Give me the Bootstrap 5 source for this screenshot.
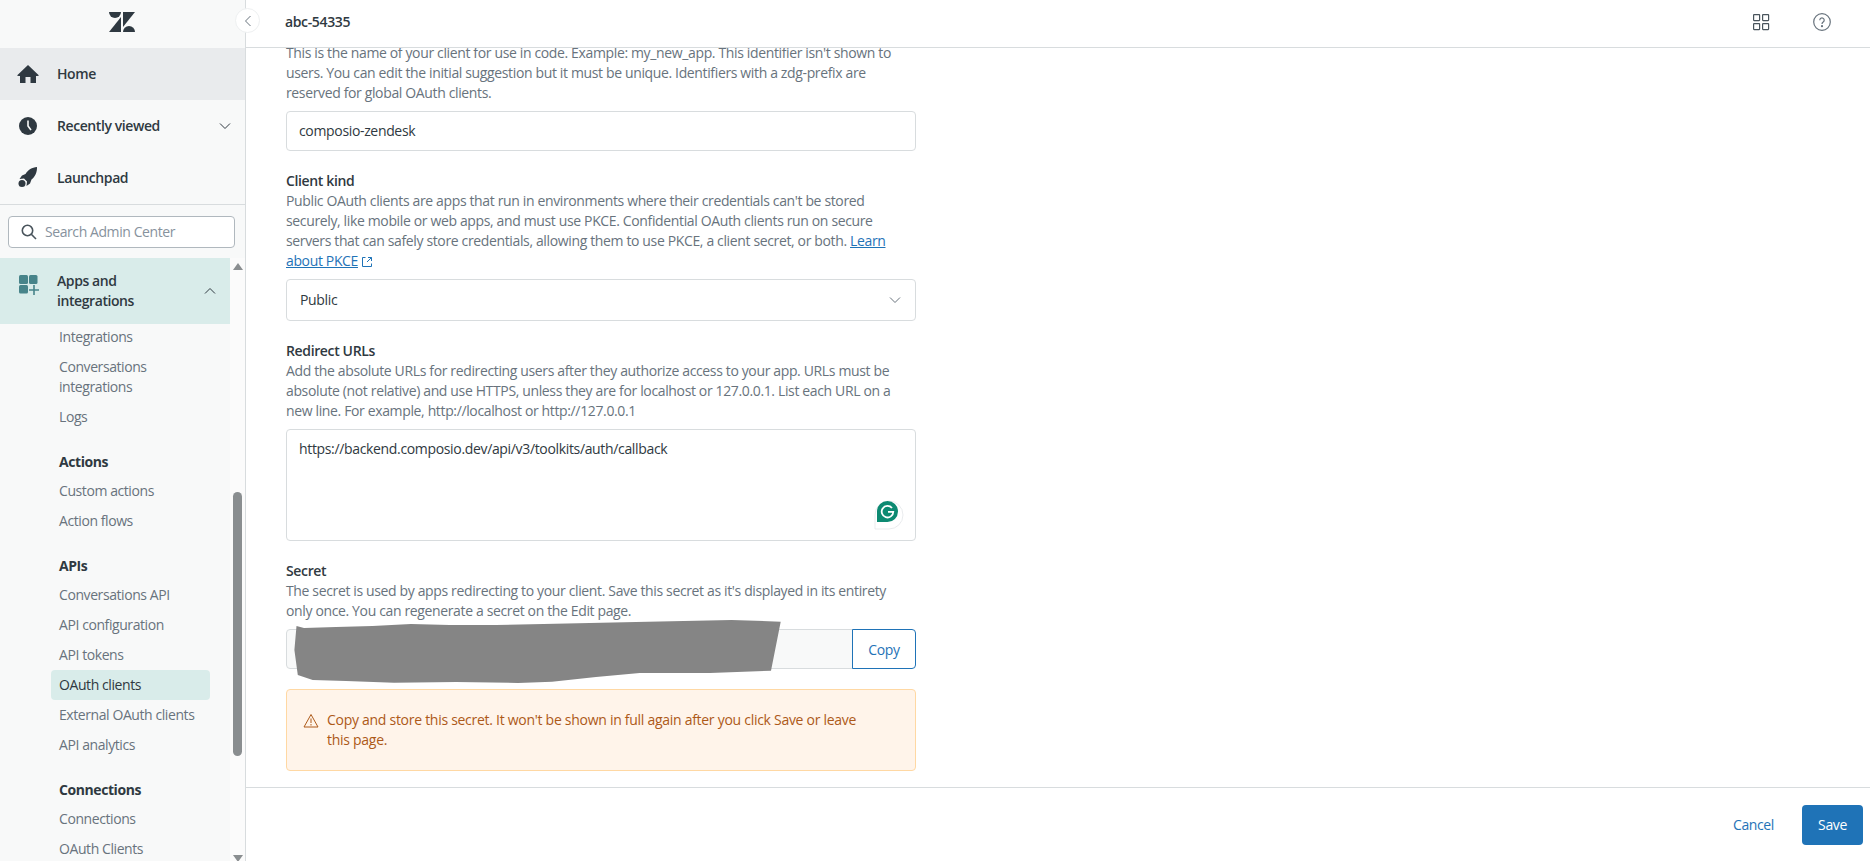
<!DOCTYPE html>
<html lang="en">
<head>
    <meta charset="UTF-8">
    <title>abc-54335 - OAuth clients</title>
    <link href="https://cdn.jsdelivr.net/npm/bootstrap@5.3.0/dist/css/bootstrap.min.css" rel="stylesheet">
    <style>
        body { font-family: "Open Sans", "Liberation Sans", sans-serif; font-size: 14px; line-height: 20px; color: #2f3941; height: 861px; letter-spacing: -0.36px; }
        .side-panel { width: 246px; background: #f8f9f9; border-right: 1px solid #d8dcde; letter-spacing: -0.42px; }
        .logo-row { height: 48px; padding: 0 0 4px 109px; }
        .top-link { height: 52px; padding-left: 16px; color: #2f3941; font-weight: 600; text-decoration: none; }
        .top-link.is-current { background: #e9ebed; }
        .top-link svg.lead-icon { width: 24px; height: 24px; margin-right: 17px; flex: none; }
        .top-links { border-bottom: 1px solid #d8dcde; }
        .search-row { padding: 11px 10px 10px 8px; }
        .search-box { height: 32px; background: #fff; border: 1px solid #b0b8be; border-radius: 4px; padding-left: 12px; color: #87929d; }
        .search-box svg { margin-right: 8px; }
        .scroll-zone { min-height: 0; }
        .nav-scroll { width: 230px; overflow: hidden; }
        .apps-row { height: 66px; background: #d9ecea; padding-left: 16px; font-weight: 600; }
        .apps-row svg.lead-icon { width: 24px; height: 24px; margin-right: 17px; flex: none; margin-top: -8px; }
        .sub-list { padding: 0 20px 0 51px; margin-top: -1.5px; }
        .sub-link { display: block; padding: 5px 8px; color: #68737d; text-decoration: none; border-radius: 4px; }
        .sub-link.is-current { background: #d9ecea; color: #2f3941; }
        .sub-head { padding: 5px 8px 4.5px; margin-top: 14.5px; font-weight: 700; color: #2f3941; }
        .track { width: 15px; background: #fbfbfb; }
        .track-up { width: 0; height: 0; margin: 5px auto 0; border: 5px solid transparent; border-top: 0; border-bottom: 7px solid #8a8e90; }
        .thumb { width: 9px; height: 264px; margin: 222px auto 0; background: #8a8e90; border-radius: 5px; }
        .track-down { width: 0; height: 0; margin: 99px auto 0; border: 5px solid transparent; border-bottom: 0; border-top: 7px solid #8a8e90; }
        .collapse-btn { left: 235px; top: 8px; width: 25px; height: 25px; background: #fff; border: 1px solid #eef0f1; border-radius: 50%; z-index: 3; }
        .head-bar { height: 48px; border-bottom: 1px solid #d8dcde; padding: 0 39px 3px 39px; flex: none; }
        .head-title { font-weight: 600; }
        .head-icons { gap: 43px; }
        .form-zone { min-height: 0; padding-left: 40px; }
        .form-col { width: 630px; margin-top: -5px; }
        .field-block { margin-bottom: 20px; }
        .field-label { font-weight: 600; display: block; }
        .field-hint { color: #68737d; margin-bottom: 8px; }
        .field-hint a { color: #1f73b7; }
        .form-control, .form-select { font-size: 14px; line-height: 20px; color: #2f3941; border-color: #d8dcde; border-radius: 4px; padding: 9px 12px; letter-spacing: -0.34px; }
        .form-select { height: 42px; padding-left: 13px; background-image: url("data:image/svg+xml,%3csvg xmlns='http://www.w3.org/2000/svg' viewBox='0 0 12 8'%3e%3cpath fill='none' stroke='%2368737d' d='M1 1.5l5 5 5-5'/%3e%3c/svg%3e"); background-size: 12px 8px; background-position: right 14px center; }
        .url-box { height: 112px; resize: none; }
        .g-badge { right: 12px; bottom: 11px; width: 30px; height: 30px; }
        .secret-field { background: #f8f9f9 !important; height: 40px; }
        .copy-btn { width: 64px; color: #1f73b7; border: 1px solid #1f73b7; background: #fff; font-size: 14px; letter-spacing: -0.38px; border-radius: 0 4px 4px 0; }
        .blot { left: 0; top: -10px; width: 520px; height: 70px; pointer-events: none; }
        .warn-box { background: #fff4ea; border: 1px solid #ffd8a3; color: #ad5918; border-radius: 4px; padding: 20px 48px 20px 16px; margin: 0; gap: 8px; letter-spacing: -0.28px; }
        .warn-box svg { flex: none; margin-top: 3px; }
        .foot-bar { height: 74px; border-top: 1px solid #d8dcde; padding-right: 7px; flex: none; }
        .cancel-btn { color: #1f73b7; font-size: 14px; letter-spacing: -0.38px; padding: 0; margin-right: 28px; border: 0; }
        .save-btn { width: 61px; height: 40px; background: #1f73b7; color: #fff; font-size: 14px; letter-spacing: -0.38px; border: 0; border-radius: 4px; padding: 0; }
    </style>
</head>
<body class="d-flex overflow-hidden bg-white">

<aside class="side-panel d-flex flex-column flex-shrink-0 position-relative">
    <div class="logo-row d-flex align-items-center">
        <svg width="26" height="20" viewBox="0 0 26 20" fill="#2f3941"><path d="M0 0h12a6 6 0 0 1-12 0z"/><path d="M12 5v15H0z"/><path d="M14 0v15L26 0z"/><path d="M14 20a6 6 0 0 1 12 0z"/></svg>
    </div>
    <div class="top-links">
        <a href="#" class="top-link is-current d-flex align-items-center">
            <svg class="lead-icon" viewBox="0 0 24 24" fill="#2f3941"><path d="M12 3 1 13.500l1.500.5H4v7h5.500v-6h5v6H20v-7h1.500l1.500-.5z"/></svg>Home
        </a>
        <a href="#" class="top-link d-flex align-items-center">
            <svg class="lead-icon" viewBox="0 0 24 24"><circle cx="12" cy="12" r="9" fill="#2f3941"/><path d="M12 6.500V12l3 4" fill="none" stroke="#f8f9f9" stroke-width="1.600"/></svg>Recently viewed
            <svg class="ms-auto" style="margin-right:14px" width="12" height="8" viewBox="0 0 12 8"><path d="M1 1.500l5 5 5-5" fill="none" stroke="#2f3941"/></svg>
        </a>
        <a href="#" class="top-link d-flex align-items-center">
            <svg class="lead-icon" viewBox="0 0 24 24" fill="#2f3941"><path d="M21 1c-5 .3-9 3-11.500 7L6 9.500 3.500 13l4.500-.5 3 3-.5 4.500 3.500-2.500 1.500-4C19 11 21.300 6 21 1z"/><circle cx="6" cy="17.500" r="3.500"/></svg>Launchpad
        </a>
    </div>
    <div class="search-row">
        <div class="search-box d-flex align-items-center">
            <svg width="16" height="16" viewBox="0 0 16 16" fill="none" stroke="#49545c" stroke-width="1.600"><circle cx="6.500" cy="6.500" r="5.200"/><path d="M10.300 10.300 15 15"/></svg>
            Search Admin Center
        </div>
    </div>
    <div class="scroll-zone d-flex flex-grow-1 overflow-hidden">
        <div class="nav-scroll">
            <div class="apps-row d-flex align-items-center">
                <svg class="lead-icon" viewBox="0 0 24 24" fill="#47848a"><rect x="3" y="0" width="9" height="9" rx="1.500"/><rect x="13" y="0" width="8.500" height="9" rx="1.500"/><rect x="3" y="10" width="9" height="8.500" rx="1.500"/><path d="M17.200 10h1.600v4.200H23v1.600h-4.200V20h-1.600v-4.200H13v-1.600h4.200z"/></svg>
                <span>Apps and<br>integrations</span>
                <svg class="ms-auto" style="margin-right:14px" width="12" height="8" viewBox="0 0 12 8"><path d="M1 6.500l5-5 5 5" fill="none" stroke="#2f3941"/></svg>
            </div>
            <div class="sub-list">
                <a href="#" class="sub-link">Integrations</a>
                <a href="#" class="sub-link">Conversations integrations</a>
                <a href="#" class="sub-link">Logs</a>
                <div class="sub-head">Actions</div>
                <a href="#" class="sub-link">Custom actions</a>
                <a href="#" class="sub-link">Action flows</a>
                <div class="sub-head">APIs</div>
                <a href="#" class="sub-link">Conversations API</a>
                <a href="#" class="sub-link">API configuration</a>
                <a href="#" class="sub-link">API tokens</a>
                <a href="#" class="sub-link is-current">OAuth clients</a>
                <a href="#" class="sub-link">External OAuth clients</a>
                <a href="#" class="sub-link">API analytics</a>
                <div class="sub-head">Connections</div>
                <a href="#" class="sub-link">Connections</a>
                <a href="#" class="sub-link">OAuth Clients</a>
            </div>
        </div>
        <div class="track">
            <div class="track-up"></div>
            <div class="thumb"></div>
            <div class="track-down"></div>
        </div>
    </div>
    <div class="collapse-btn position-absolute d-flex align-items-center justify-content-center">
        <svg width="8" height="12" viewBox="0 0 8 12"><path d="M6.500 1l-5 5 5 5" fill="none" stroke="#68737d"/></svg>
    </div>
</aside>

<main class="d-flex flex-column flex-grow-1" style="min-width:0">
    <header class="head-bar d-flex align-items-center justify-content-between">
        <span class="head-title">abc-54335</span>
        <div class="head-icons d-flex align-items-center">
            <svg width="18" height="18" viewBox="0 0 18 18" fill="none" stroke="#49545c" stroke-width="1.200"><rect x="1.600" y="1.600" width="6" height="6" rx=".5"/><rect x="10.600" y="1.600" width="6" height="6" rx=".5"/><rect x="1.600" y="10.600" width="6" height="6" rx=".5"/><rect x="10.600" y="10.600" width="6" height="6" rx=".5"/></svg>
            <svg width="18" height="18" viewBox="0 0 18 18" fill="none" stroke="#68737d" stroke-width="1.200"><circle cx="9" cy="9" r="8.300"/><path d="M6.800 7.200a2.200 2.200 0 1 1 3.400 1.800c-.8.500-1.200 1-1.200 2"/><circle cx="9" cy="13.200" r=".5" fill="#68737d"/></svg>
        </div>
    </header>

    <div class="form-zone flex-grow-1 overflow-hidden">
        <form class="form-col">
            <div class="field-block">
                <div class="field-hint">This is the name of your client for use in code. Example: my_new_app. This identifier isn't shown to users. You can edit the initial suggestion but it must be unique. Identifiers with a zdg-prefix are reserved for global OAuth clients.</div>
                <input class="form-control" type="text" value="composio-zendesk">
            </div>
            <div class="field-block">
                <label class="field-label">Client kind</label>
                <div class="field-hint">Public OAuth clients are apps that run in environments where their credentials can't be stored securely, like mobile or web apps, and must use PKCE. Confidential OAuth clients run on secure servers that can safely store credentials, allowing them to use PKCE, a client secret, or both. <a href="#">Learn about PKCE</a>
                    <svg width="12" height="12" viewBox="0 0 12 12" fill="none" stroke="#1f73b7"><path d="M4.500 1.500h-3v9h9v-3M7 1.500h3.500V5M10.500 1.500 6 6"/></svg>
                </div>
                <select class="form-select"><option>Public</option></select>
            </div>
            <div class="field-block">
                <label class="field-label">Redirect URLs</label>
                <div class="field-hint">Add the absolute URLs for redirecting users after they authorize access to your app. URLs must be absolute (not relative) and use HTTPS, unless they are for localhost or 127.0.0.1. List each URL on a new line. For example, http://localhost or http://127.0.0.1</div>
                <div class="position-relative">
                    <textarea class="form-control url-box">https://backend.composio.dev/api/v3/toolkits/auth/callback</textarea>
                    <svg class="g-badge position-absolute" viewBox="0 0 30 30"><path d="M1 29V15a14 14 0 1 1 14 14z" fill="#fff" stroke="#e3e6e8" stroke-width=".8"/><path d="M3 22V11.500a10.500 10.500 0 1 1 10.500 10.500z" fill="#0d8a72"/><path d="M18 8a5.800 5.800 0 1 0 1.300 3.800h-5.300" fill="none" stroke="#fff" stroke-width="1.800"/></svg>
                </div>
            </div>
            <div class="field-block">
                <label class="field-label">Secret</label>
                <div class="field-hint">The secret is used by apps redirecting to your client. Save this secret as it's displayed in its entirety<br>only once. You can regenerate a secret on the Edit page.</div>
                <div class="position-relative">
                    <div class="input-group">
                        <input class="form-control secret-field" type="text" readonly>
                        <button type="button" class="btn copy-btn">Copy</button>
                    </div>
                    <svg class="blot position-absolute" viewBox="0 0 520 70"><path d="M10.500 7 18 9 50 8 86.500 7 125 5 163.500 6 210 6 257.500 5 350 3 445.500 1 494.700 2.700 485 51.700 424 54 353.700 54 310 58 266 62.700 232 64 170 63 108 63.700 60 62 26.700 61 11.800 56 8.400 31z" fill="#858585"/></svg>
                </div>
            </div>
            <div class="warn-box d-flex align-items-start">
                <svg width="16" height="15" viewBox="0 0 16 15" fill="none" stroke="#ad5918"><path d="M8 1.500 1 14h14z"/><path d="M8 5.500v4.500M8 11v1.500"/></svg>
                <div>Copy and store this secret. It won't be shown in full again after you click Save or leave this page.</div>
            </div>
        </form>
    </div>

    <footer class="foot-bar d-flex align-items-center justify-content-end">
        <button type="button" class="btn cancel-btn">Cancel</button>
        <button type="button" class="btn save-btn">Save</button>
    </footer>
</main>

<script src="https://cdn.jsdelivr.net/npm/bootstrap@5.3.0/dist/js/bootstrap.bundle.min.js"></script>
</body>
</html>
